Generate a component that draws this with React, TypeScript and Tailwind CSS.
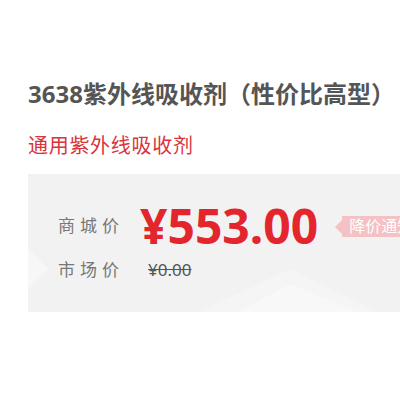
export default function App() {
  const font = { fontFamily: '"Noto Sans", "Noto Sans CJK SC", sans-serif' };
  return (
    <div className="h-[400px] w-[400px] overflow-hidden bg-white" style={font}>
      <div className="pl-[28px] pt-[76px]">
        <h1 className="whitespace-nowrap text-[24px] font-bold leading-[36px] text-[#555555]">
          3638紫外线吸收剂（性价比高型）
        </h1>
        <p className="mt-[20px] whitespace-nowrap text-[20px] leading-[28px] tracking-[0.7px] text-[#d8343c]">
          通用紫外线吸收剂
        </p>
        <div className="relative mt-[14px] h-[138px] w-[400px] bg-[#f2f2f2]">
          <svg className="absolute inset-0" width="400" height="138" viewBox="0 0 400 138">
            <polygon points="0,75 20,95 0,115" fill="#f7f7f7" />
            <polygon points="170,138 262,95 350,138" fill="#f5f5f5" />
            <polygon points="210,138 262,110 330,138" fill="#f8f8f8" />
          </svg>
          <div className="relative flex flex-col pl-[30px] pt-[26px]">
            <div className="flex h-[52px] items-center">
              <span className="w-[82px] text-[17px] tracking-[5px] text-[#777777]">商城价</span>
              <span className="text-[48px] font-bold leading-[52px] text-[#e3262d]">¥553.00</span>
              <span className="relative ml-[24px] whitespace-nowrap bg-[#f4c2c4] px-[7px] text-[16px] leading-[21px] text-white">
                <span className="absolute left-[-7px] top-[4px] h-0 w-0 border-y-[7px] border-r-[7px] border-y-transparent border-r-[#f4c2c4]" />
                降价通知
              </span>
            </div>
            <div className="mt-[6px] flex h-[24px] items-center">
              <span className="w-[90px] text-[17px] tracking-[5px] text-[#777777]">市场价</span>
              <span className="text-[17px] text-[#555555] line-through">¥0.00</span>
            </div>
          </div>
        </div>
      </div>
    </div>
  );
}
